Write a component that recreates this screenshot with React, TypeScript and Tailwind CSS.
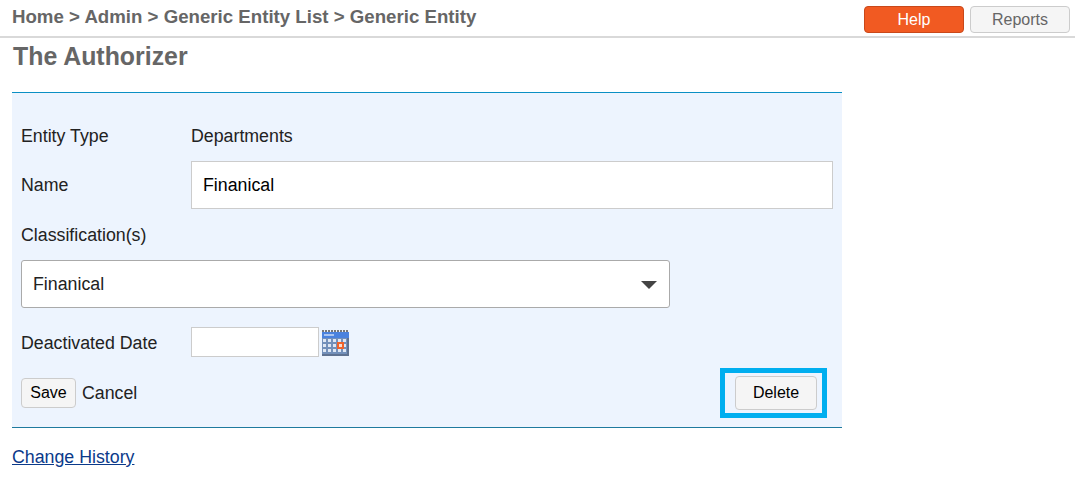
const font = "font-['Liberation_Sans',Arial,sans-serif]";

function CalendarIcon() {
  return (
    <svg width="27" height="27" viewBox="0 0 27 27" className="block">
      <rect x="0" y="3" width="27" height="24" fill="#7390ba" />
      {[0, 3, 6, 9, 12, 15, 18, 21, 24].map((x) => (
        <rect key={x} x={x} y="1" width="2" height="2" fill="#777" />
      ))}
      <rect x="0" y="3" width="27" height="6" fill="#4a82de" />
      <rect x="2" y="5" width="10" height="2" fill="#a9c4f0" />
      {[10, 15, 20].map((y) =>
        [1, 6, 11, 16, 21].map((x) => (
          <rect key={x + "-" + y} x={x} y={y} width="3" height="3" fill="#dfe7f3" />
        ))
      )}
      <rect x="15" y="13" width="7" height="7" fill="#f0622a" />
      <rect x="17" y="15" width="3" height="3" fill="#f5dfd3" />
      <rect x="0" y="25" width="27" height="2" fill="#5f7291" />
      <rect x="25" y="9" width="2" height="18" fill="#5f7291" />
    </svg>
  );
}

export default function App() {
  return (
    <div className={`${font} w-[1075px] h-[477px] bg-white text-[17.78px] text-[#222] overflow-hidden`}>
      {/* Top bar */}
      <div className="h-[38px] border-b-2 border-[#d9d9d9] pl-3 pr-[5px] flex items-start justify-between">
        <div className="text-[18.67px] font-bold text-[#666] leading-[21px] pt-[6px]">
          Home &gt; Admin &gt; Generic Entity List &gt; Generic Entity
        </div>
        <div className="flex gap-[6px] pt-[6px]">
          <button className="w-[100px] h-[27px] rounded bg-[#f15a22] border border-[#c9481a] text-white text-[16px]">Help</button>
          <button className="w-[100px] h-[27px] rounded bg-[#f5f5f5] border border-[#ccc] text-[#666] text-[16px]">Reports</button>
        </div>
      </div>

      <div className="pl-3">
        <h1 className="text-[24.89px] font-bold text-[#666] leading-[28px] pt-[4px] pl-px">The Authorizer</h1>

        {/* Form panel */}
        <div className="mt-[22px] w-[830px] h-[336px] bg-[#edf4fe] border-t border-b border-t-[#0a8fc4] border-b-[#1f7a9e] px-[9px]">
          <div className="flex items-center h-[20px] mt-[33px] pt-px">
            <span className="w-[170px]">Entity Type</span>
            <span>Departments</span>
          </div>

          <div className="flex items-center mt-[15px]">
            <span className="w-[170px] pt-px">Name</span>
            <div className="w-[642px] h-[48px] bg-white border border-[#ccc] flex items-center pl-[11px] pt-px text-black">Finanical</div>
          </div>

          <div className="h-[20px] mt-[16px] leading-[20px]">Classification(s)</div>

          <div className="mt-[15px] w-[649px] h-[48px] bg-white border border-[#aaa] rounded-[3px] flex items-center justify-between pl-[11px] pr-[12px] pt-px">
            <span>Finanical</span>
            <span className="w-0 h-0 border-l-[8px] border-r-[8px] border-t-[8px] border-l-transparent border-r-transparent border-t-[#444]" />
          </div>

          <div className="flex items-center mt-[19px]">
            <span className="w-[170px] pt-[2px]">Deactivated Date</span>
            <div className="w-[128px] h-[30px] bg-white border border-[#ccc]" />
            <span className="ml-[3px]"><CalendarIcon /></span>
          </div>

          <div className="flex items-center justify-between mt-[11px] pr-[6px]">
            <div className="flex items-center gap-[6px]">
              <button className="w-[55px] h-[30px] rounded bg-[#f5f5f5] border border-[#ccc] text-[16px] text-black">Save</button>
              <span>Cancel</span>
            </div>
            <div className="w-[107px] h-[50px] border-[5px] border-[#00aeef] flex items-center justify-end pr-[5px]">
              <button className="w-[82px] h-[34px] rounded bg-[#f5f5f5] border border-[#ccc] text-[16px] text-black">Delete</button>
            </div>
          </div>
        </div>

        <a href="#" className="block mt-[19px] text-[#0b3a8a] underline leading-[20px]">Change History</a>
      </div>
    </div>
  );
}
